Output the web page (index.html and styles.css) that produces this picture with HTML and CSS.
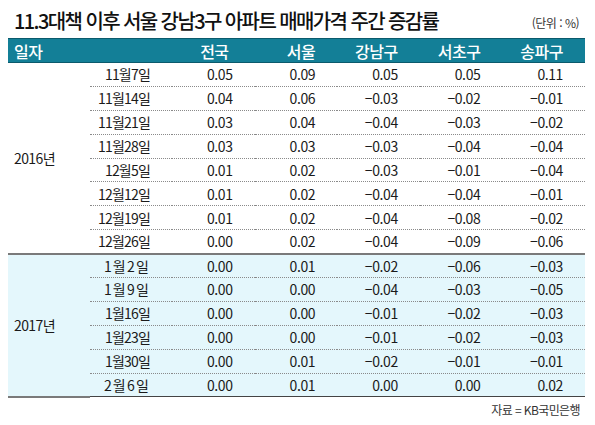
FILE: index.html
```html
<!DOCTYPE html>
<html lang="ko">
<head>
    <meta charset="UTF-8">
    <title>11.3대책 이후 서울 강남3구 아파트 매매가격 주간 증감률</title>
    <link rel="stylesheet" href="styles.css">
</head>
<body>
    <section class="chart">
        <header class="chart__head">
            <h1>11.3대책 이후 서울 강남3구 아파트 매매가격 주간 증감률</h1>
            <span class="unit">(단위 : %)</span>
        </header>
        <table class="rates">
            <colgroup>
                <col class="col-year">
                <col class="col-date">
                <col span="5">
            </colgroup>
            <thead>
                <tr>
                    <th class="year">일자</th>
                    <th></th>
                    <th class="num num--first">전국</th>
                    <th class="num">서울</th>
                    <th class="num">강남구</th>
                    <th class="num">서초구</th>
                    <th class="num">송파구</th>
                </tr>
            </thead>
            <tbody class="y2016">
                <tr>
                    <td class="year" rowspan="8">2016년</td>
                    <td class="date">11월7일</td>
                    <td>0.05</td><td>0.09</td><td>0.05</td><td>0.05</td><td>0.11</td>
                </tr>
                <tr>
                    <td class="date">11월14일</td>
                    <td>0.04</td><td>0.06</td><td>−0.03</td><td>−0.02</td><td>−0.01</td>
                </tr>
                <tr>
                    <td class="date">11월21일</td>
                    <td>0.03</td><td>0.04</td><td>−0.04</td><td>−0.03</td><td>−0.02</td>
                </tr>
                <tr>
                    <td class="date">11월28일</td>
                    <td>0.03</td><td>0.03</td><td>−0.03</td><td>−0.04</td><td>−0.04</td>
                </tr>
                <tr>
                    <td class="date">12월5일</td>
                    <td>0.01</td><td>0.02</td><td>−0.03</td><td>−0.01</td><td>−0.04</td>
                </tr>
                <tr>
                    <td class="date">12월12일</td>
                    <td>0.01</td><td>0.02</td><td>−0.04</td><td>−0.04</td><td>−0.01</td>
                </tr>
                <tr>
                    <td class="date">12월19일</td>
                    <td>0.01</td><td>0.02</td><td>−0.04</td><td>−0.08</td><td>−0.02</td>
                </tr>
                <tr class="last">
                    <td class="date">12월26일</td>
                    <td>0.00</td><td>0.02</td><td>−0.04</td><td>−0.09</td><td>−0.06</td>
                </tr>
            </tbody>
            <tbody class="y2017">
                <tr>
                    <td class="year" rowspan="6">2017년</td>
                    <td class="date date--wide">1월2일</td>
                    <td>0.00</td><td>0.01</td><td>−0.02</td><td>−0.06</td><td>−0.03</td>
                </tr>
                <tr>
                    <td class="date date--wide">1월9일</td>
                    <td>0.00</td><td>0.00</td><td>−0.04</td><td>−0.03</td><td>−0.05</td>
                </tr>
                <tr>
                    <td class="date">1월16일</td>
                    <td>0.00</td><td>0.00</td><td>−0.01</td><td>−0.02</td><td>−0.03</td>
                </tr>
                <tr>
                    <td class="date">1월23일</td>
                    <td>0.00</td><td>0.00</td><td>−0.01</td><td>−0.02</td><td>−0.03</td>
                </tr>
                <tr>
                    <td class="date">1월30일</td>
                    <td>0.00</td><td>0.01</td><td>−0.02</td><td>−0.01</td><td>−0.01</td>
                </tr>
                <tr class="last">
                    <td class="date date--wide">2월6일</td>
                    <td>0.00</td><td>0.01</td><td>0.00</td><td>0.00</td><td>0.02</td>
                </tr>
            </tbody>
        </table>
        <footer class="source">자료 = KB국민은행</footer>
    </section>
</body>
</html>
```

FILE: styles.css
```css
* {
    margin: 0;
    padding: 0;
    box-sizing: border-box;
}

body {
    background-color: #fff;
    color: #1a1a1a;
    font-family: "Noto Sans CJK KR", "Noto Sans", sans-serif;
    margin: 0;
}

.chart {
    width: 577px;
    margin-left: 8px;
}

.chart__head {
    display: flex;
    align-items: flex-end;
    justify-content: space-between;
    height: 38px;
    padding: 0 6px 5px 6px;
}

.chart__head h1 {
    font-size: 20px;
    font-weight: 500;
    letter-spacing: -1.6px;
    line-height: 24px;
    color: #111;
}

.chart__head .unit {
    font-size: 12px;
    letter-spacing: -0.5px;
    line-height: 16px;
    color: #333;
    margin-bottom: 2px;
}

.rates {
    width: 100%;
    border-collapse: collapse;
    table-layout: fixed;
    font-size: 14px;
    letter-spacing: -0.4px;
}

.rates .col-year {
    width: 82px;
}

.rates .col-date {
    width: 82px;
}

.rates thead tr {
    background-color: #137f97;
    color: #fff;
    height: 24px;
}

.rates thead th {
    border-top: 1px solid #0b5a6c;
    border-bottom: 1px solid #0b5a6c;
    font-size: 16px;
    font-weight: 500;
    letter-spacing: -0.5px;
    line-height: 20px;
    padding: 0 22px 0 0;
    text-align: right;
}

.rates thead th.year {
    text-align: left;
    padding-left: 6px;
}

.rates thead th.num--first {
    padding-right: 26px;
}

.rates tbody tr {
    height: 23.9px;
}

.rates tbody td {
    border-bottom: 1px dotted #8a8a8a;
    line-height: 18px;
    padding: 0 22px 0 0;
    text-align: right;
    vertical-align: middle;
}

.rates tbody td.year {
    border-bottom: none;
    text-align: left;
    padding-left: 6px;
    letter-spacing: -0.6px;
}

.rates tbody td.date {
    letter-spacing: -0.8px;
}

.rates tbody td.date--wide {
    letter-spacing: 1.2px;
}

.rates tbody tr.last td,
.rates tbody tr td.year {
    border-bottom: 2px solid #7a7a7a;
}

.rates tbody.y2017 {
    background-color: #e4f7fc;
}

.rates tbody.y2017 tr.last td {
    border-bottom: 1px solid #444;
}

.source {
    font-size: 12px;
    letter-spacing: -0.6px;
    line-height: 16px;
    color: #333;
    text-align: right;
    padding: 4px 5px 0 0;
}
```
